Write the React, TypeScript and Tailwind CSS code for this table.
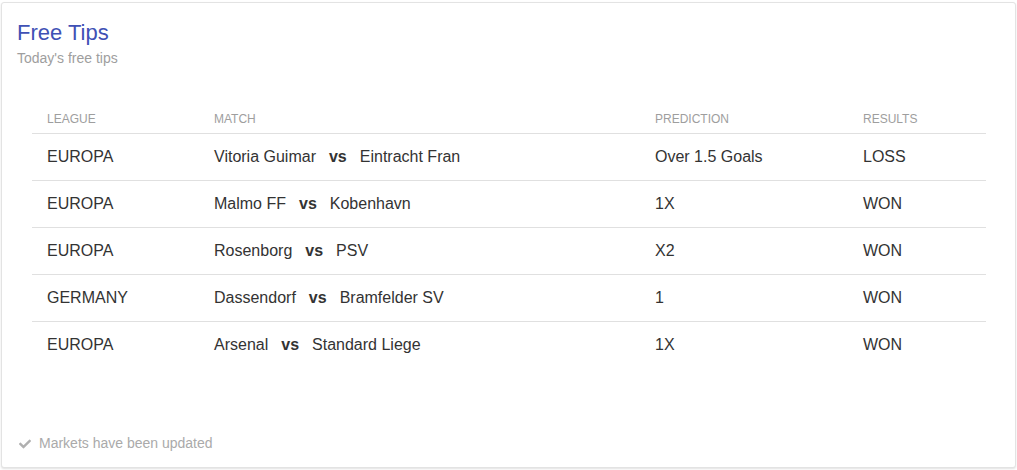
const tips = [
  { league: "EUROPA", home: "Vitoria Guimar", away: "Eintracht Fran", prediction: "Over 1.5 Goals", result: "LOSS" },
  { league: "EUROPA", home: "Malmo FF", away: "Kobenhavn", prediction: "1X", result: "WON" },
  { league: "EUROPA", home: "Rosenborg", away: "PSV", prediction: "X2", result: "WON" },
  { league: "GERMANY", home: "Dassendorf", away: "Bramfelder SV", prediction: "1", result: "WON" },
  { league: "EUROPA", home: "Arsenal", away: "Standard Liege", prediction: "1X", result: "WON" },
];

function CheckIcon() {
  return (
    <svg viewBox="0 0 512 512" className="w-[12px] h-[12px] fill-[#b0b0b0]">
      <path d="M173.9 439.4l-166.4-166.4c-10-10-10-26.2 0-36.2l36.2-36.2c10-10 26.2-10 36.2 0L192 312.7 432.1 72.6c10-10 26.2-10 36.2 0l36.2 36.2c10 10 10 26.2 0 36.2L210.1 439.4c-10 10-26.2 10-36.2 0z" />
    </svg>
  );
}

export default function App() {
  return (
    <div className="bg-white min-h-[470px] pt-[2px] px-[1px] font-['Liberation_Sans',Arial,sans-serif]">
      {/* Card */}
      <div className="h-[466px] flex flex-col bg-white border border-[#e3e3e3] rounded-[3px] shadow-[0_1px_2px_rgba(0,0,0,0.12)]">
        {/* Header */}
        <div className="pt-[17px] pl-[15px]">
          <h2 className="text-[22px] leading-[26px] text-[#3f51b5]">Free Tips</h2>
          <p className="mt-[4px] text-[14px] leading-[17px] text-[#9e9e9e]">Today's free tips</p>
        </div>

        {/* Table */}
        <div className="mt-[39px] ml-[30px] mr-[29px]">
          <table className="w-full table-fixed border-collapse text-left">
            <colgroup>
              <col className="w-[167px]" />
              <col className="w-[441px]" />
              <col className="w-[208px]" />
              <col />
            </colgroup>
            <thead>
              <tr className="text-[12px] leading-[14px] text-[#9e9e9e] uppercase">
                <th className="font-normal pt-[6px] pb-[7px] px-[15px]">League</th>
                <th className="font-normal pt-[6px] pb-[7px] px-[15px]">Match</th>
                <th className="font-normal pt-[6px] pb-[7px] px-[15px]">Prediction</th>
                <th className="font-normal pt-[6px] pb-[7px] px-[15px]">Results</th>
              </tr>
            </thead>
            <tbody className="text-[16px] leading-[20px] text-[#333]">
              {tips.map((t, i) => (
                <tr key={i} className="border-t border-[#e0e0e0] h-[47px]">
                  <td className="px-[15px] align-middle">{t.league}</td>
                  <td className="px-[15px] align-middle whitespace-nowrap">
                    {t.home}
                    <span className="font-bold mx-[13px]">vs</span>
                    {t.away}
                  </td>
                  <td className="px-[15px] align-middle">{t.prediction}</td>
                  <td className="px-[15px] align-middle">{t.result}</td>
                </tr>
              ))}
            </tbody>
          </table>
        </div>

        {/* Footer */}
        <div className="mt-auto pb-[15px] pl-[17px] flex items-center gap-[8px] text-[14px] leading-[17px] text-[#aaa]">
          <CheckIcon />
          <span>Markets have been updated</span>
        </div>
      </div>
    </div>
  );
}
